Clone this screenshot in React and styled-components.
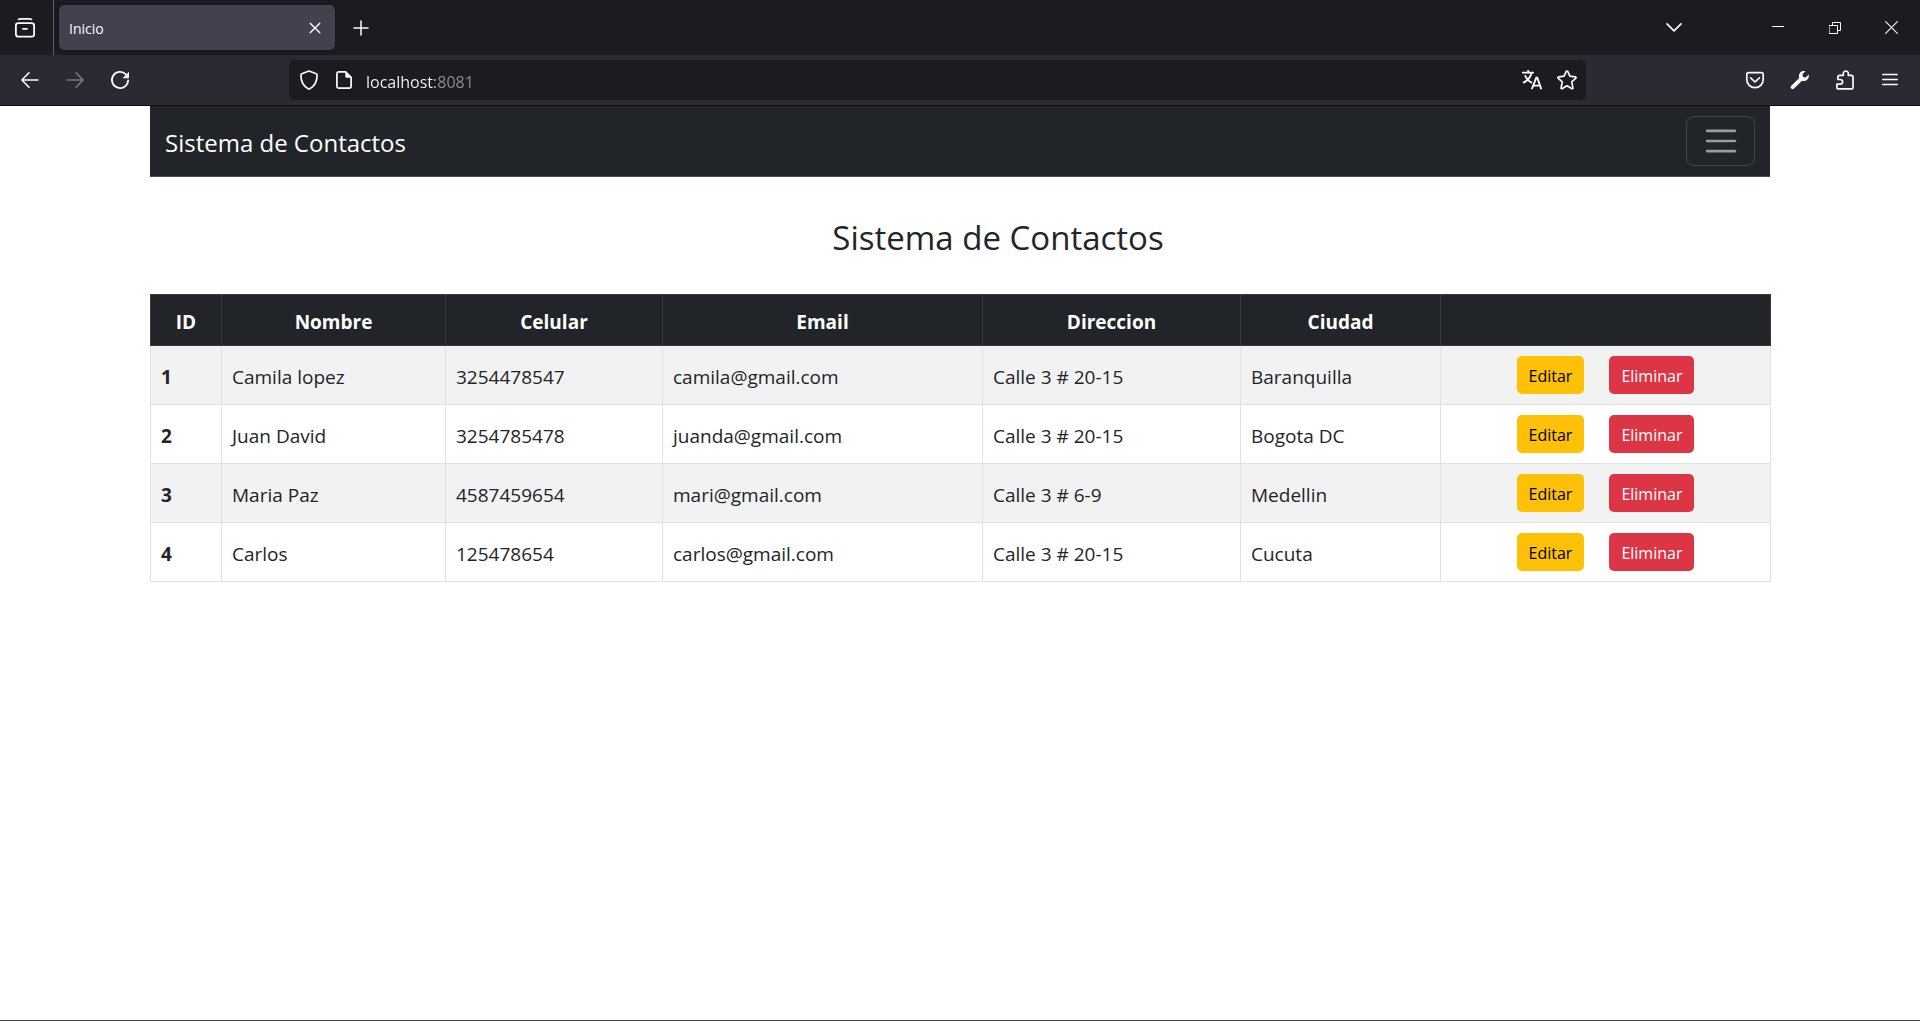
import React from "react";
import styled, { createGlobalStyle, css } from "styled-components";

const GlobalStyle = createGlobalStyle`
  *, *::before, *::after { box-sizing: border-box; }
  body {
    margin: 0;
    background: #fff;
    color: #212529;
    font-family: "Segoe UI", "Open Sans", "Noto Sans", sans-serif;
    font-size: 19px;
    line-height: 30px;
  }
  button, input { font-family: inherit; }
`;

const Window = styled.div`
  min-height: 100vh;
  display: flex;
  flex-direction: column;
  border-bottom: 1px solid #444;
`;

/* Browser chrome */

const TabStrip = styled.div`
  display: flex;
  align-items: center;
  height: 55px;
  background: #1c1b22;
  color: #fbfbfe;
`;

const IconButton = styled.button`
  display: flex;
  align-items: center;
  justify-content: center;
  flex: none;
  width: ${({ $width = 44 }) => $width}px;
  height: 40px;
  padding: 0;
  border: 0;
  border-radius: 5px;
  background: transparent;
  color: #fbfbfe;

  &:disabled { color: #7c7b82; }
`;

const ViewArea = styled.div`
  display: flex;
  align-items: center;
  align-self: stretch;
  width: 54px;
  padding-left: 3px;
  margin-right: 5px;
  border-right: 1px solid #5c5b62;
`;

const Tab = styled.div`
  display: flex;
  align-items: center;
  justify-content: space-between;
  width: 276px;
  height: 45px;
  margin-right: 4px;
  padding: 0 5px 0 10px;
  border-radius: 5px;
  background: #42414d;
  box-shadow: 0 0 4px rgba(0, 0, 0, 0.4);
  font-size: 14px;
  line-height: 20px;
`;

const TabTitle = styled.span`
  padding-top: 2px;
`;

const WindowControls = styled.div`
  display: flex;
  margin-left: auto;
`;

const ListTabs = styled.div`
  margin-right: 53px;
`;

const Toolbar = styled.div`
  display: flex;
  align-items: center;
  height: 51px;
  padding: 0 8px;
  border-bottom: 1px solid #0c0c0d;
  background: #2b2a33;
`;

const ButtonGroup = styled.div`
  display: flex;
  gap: 1px;
`;

const UrlBar = styled.form`
  display: flex;
  align-items: center;
  flex: 1;
  min-width: 0;
  height: 40px;
  margin: 0 147px;
  padding: 0 2px;
  border-radius: 5px;
  background: #1c1b22;
`;

const UrlInput = styled.input`
  flex: 1;
  min-width: 0;
  height: 32px;
  margin-left: 5px;
  padding: 4px 0 0;
  border: 0;
  outline: 0;
  color: #fbfbfe;
  font-size: 16px;
  line-height: 28px;
  background: linear-gradient(90deg, #fbfbfe 69px, #8f8e96 69px);
  background-clip: text;
  -webkit-background-clip: text;
  -webkit-text-fill-color: transparent;
`;

/* Page */

const Container = styled.div`
  width: 100%;
  max-width: 1620px;
  margin: 0 auto;
`;

const Navbar = styled.nav`
  display: flex;
  align-items: center;
  justify-content: space-between;
  padding: 10px 15px;
  border-bottom: 1px solid #495057;
  background: #212529;
`;

const Brand = styled.a`
  padding-top: 4px;
  color: #fff;
  font-size: 24px;
  line-height: 38px;
  text-decoration: none;
`;

const Toggler = styled.button`
  display: flex;
  align-items: center;
  justify-content: center;
  width: 69px;
  height: 50px;
  padding: 0;
  border: 1px solid rgba(255, 255, 255, 0.15);
  border-radius: 8px;
  background: transparent;
  color: rgba(255, 255, 255, 0.55);
`;

const Title = styled.h3`
  margin: 0;
  padding: 40px 0 35px 76px;
  font-size: 33px;
  font-weight: 400;
  line-height: 42px;
  text-align: center;
`;

const Table = styled.table`
  width: 100%;
  table-layout: fixed;
  border-collapse: collapse;
`;

const cell = css`
  padding: 12px 10px 8px;
  border: 1px solid #dee2e6;
  vertical-align: middle;
`;

const HeadCell = styled.th`
  ${cell}
  border-color: #373b3e;
  background: #212529;
  color: #fff;
  font-weight: 700;
  text-align: center;
`;

const Row = styled.tr`
  background: #fff;
  &:nth-child(odd) { background: #f2f2f2; }
`;

const IdCell = styled.th`
  ${cell}
  font-weight: 700;
  text-align: left;
`;

const Cell = styled.td`
  ${cell}
`;

const ActionCell = styled(Cell)`
  padding: 10px;
`;

const Actions = styled.div`
  display: flex;
  justify-content: center;
  gap: 25px;
`;

const tones = {
  warning: { background: "#ffc107", color: "#000" },
  danger: { background: "#dc3545", color: "#fff" },
};

const ActionLink = styled.a`
  padding: 7px 12px 5px;
  border-radius: 5px;
  background: ${({ $tone }) => tones[$tone].background};
  color: ${({ $tone }) => tones[$tone].color};
  font-size: 16px;
  line-height: 26px;
  text-decoration: none;
`;

/* Icons */

const Icon = ({ size = 20, box = 20, stroke = 1.6, children }) => (
  <svg
    width={size}
    height={size}
    viewBox={`0 0 ${box} ${box}`}
    fill="none"
    stroke="currentColor"
    strokeWidth={stroke}
    strokeLinecap="round"
    strokeLinejoin="round"
    aria-hidden="true"
  >
    {children}
  </svg>
);

const ViewIcon = () => (
  <Icon stroke={1.8}>
    <path d="M3.6 1.4C4.2.9 5 .9 5.6.9h8.8c.6 0 1.400 0 2 .5" />
    <rect x="0.9" y="5.2" width="18.200" height="13.500" rx="2.400" />
    <path d="M8 10.800h4" />
  </Icon>
);
const CloseTabIcon = () => (
  <Icon stroke={1.4}><path d="M5.200 5.200l9.600 9.600M14.800 5.200l-9.600 9.600" /></Icon>
);
const PlusIcon = () => (
  <Icon stroke={1.5}><path d="M10 3v14M3 10h14" /></Icon>
);
const ChevronIcon = () => (
  <Icon stroke={1.700}><path d="M3 5.800l7 7 7-7" /></Icon>
);
const MinimizeIcon = () => (
  <Icon size={12} box={12} stroke={1}><path strokeLinecap="butt" d="M0 4.500h12" /></Icon>
);
const RestoreIcon = () => (
  <Icon size={12} box={12} stroke={1}>
    <path strokeLinejoin="miter" d="M.5 3.500h8v8h-8zM3.500 3.500v-3h8v8h-3" />
  </Icon>
);
const CloseIcon = () => (
  <Icon size={13} box={13} stroke={1.100}><path strokeLinecap="butt" d="M.3.3l12.400 12.400M12.700.3L.3 12.700" /></Icon>
);
const BackIcon = () => (
  <Icon><path d="M18 10H2M9 2.800L1.900 10 9 17.200" /></Icon>
);
const ForwardIcon = () => (
  <Icon><path d="M2 10h16M11 2.800l7.100 7.200-7.100 7.200" /></Icon>
);
const ReloadIcon = () => (
  <Icon stroke={1.800}>
    <path d="M15.800 4.300A8.100 8.100 0 1 0 18.100 10.500" />
    <path d="M19 1.700v6.500h-6.500z" fill="currentColor" stroke="none" />
  </Icon>
);
const ShieldIcon = () => (
  <Icon stroke={1.700}>
    <path d="M10 1l7.200 2.800c.6.200.9.700.9 1.300 0 6.400-2.200 11-7.300 13.700-.5.300-1.100.300-1.600 0C4.100 16.100 1.900 11.500 1.900 5.100c0-.6.300-1.100.9-1.300z" />
  </Icon>
);
const PageIcon = () => (
  <Icon stroke={1.700}>
    <path d="M4.400 1.900h7.200l5.500 5.500v8.900a1.900 1.900 0 0 1-1.900 1.900H4.800a1.900 1.900 0 0 1-1.900-1.900V3.800a1.900 1.900 0 0 1 1.900-1.900z" />
    <path d="M11.300 1.900v4.600c0 .8.400 1.200 1.200 1.200h4.600z" fill="currentColor" stroke="none" />
  </Icon>
);
const TranslateIcon = () => (
  <Icon stroke={1.900}>
    <path strokeLinecap="butt" d="M0 2.600h12M6.200 0v2.600M3 5.200c1.200 3.300 4 6 7 7.600M9.400 3c-.8 4.300-3.600 7.600-8.400 9.800" />
    <path strokeLinecap="butt" strokeLinejoin="miter" d="M9.800 19.200l4.500-11.500h1l4 11.500M11.400 15.600h6.800" />
  </Icon>
);
const StarIcon = () => (
  <Icon stroke={1.700}>
    <path d="M9.200 1.500c.3-.7 1.300-.7 1.600 0l2.100 4.700 5.300.6c.8.100 1.100 1 .5 1.500l-4 3.500 1.200 5.900c.2.800-.7 1.300-1.300.9L10 15.800l-4.600 2.800c-.6.400-1.500-.1-1.300-.9l1.200-5.900-4-3.500c-.6-.5-.3-1.400.5-1.500l5.300-.6z" />
  </Icon>
);
const PocketIcon = () => (
  <Icon stroke={1.700}>
    <path d="M3.600 2.700h12.800c1 0 1.800.8 1.800 1.800v5a8.200 8.200 0 0 1-16.400 0v-5c0-1 .8-1.800 1.800-1.800z" />
    <path d="M5.600 7.800L10 12l4.400-4.200" />
  </Icon>
);
const WrenchIcon = () => (
  <Icon stroke={1}>
    <path
      fill="currentColor"
      stroke="none"
      d="M18.700 4.600l-3 3-2.600-.7-.7-2.600 3-3c-2-.6-4.200 0-5.500 1.700-1.100 1.500-1.300 3.300-.7 4.900L1.300 15.800a1.900 1.900 0 0 0 2.700 2.800l8.100-7.800c1.700.6 3.600.3 5-1 1.600-1.400 2.100-3.400 1.600-5.200z"
    />
  </Icon>
);
const PuzzleIcon = () => (
  <Icon stroke={1.700}>
    <path d="M3.500 18.900h12.800c1 0 1.700-.7 1.700-1.700V7c0-1-.7-1.700-1.700-1.700h-3V3.500a2.500 2.500 0 0 0-5 0v1.800H4.500c-1 0-1.600.7-1.600 1.700v2.500h2.300a2.300 2.300 0 0 1 0 4.700H1.900v3c0 1 .6 1.700 1.600 1.700z" />
  </Icon>
);
const MenuIcon = () => (
  <Icon stroke={1.500}><path d="M2.800 4.500h14.400M2.800 9.500h14.400M2.800 14.500h14.400" /></Icon>
);
const TogglerIcon = () => (
  <Icon size={38} box={30} stroke={2}><path d="M4 7h22M4 15h22M4 23h22" /></Icon>
);

/* Data */

const columns = [
  { label: "ID", width: 71 },
  { label: "Nombre", width: 224 },
  { label: "Celular", width: 217 },
  { label: "Email", width: 320 },
  { label: "Direccion", width: 258 },
  { label: "Ciudad", width: 200 },
  { label: "", width: 330 },
];

const Col = styled.col`
  width: ${({ $width }) => $width}px;
`;

const contacts = [
  { id: 1, nombre: "Camila lopez", celular: "3254478547", email: "camila@gmail.com", direccion: "Calle 3 # 20-15", ciudad: "Baranquilla" },
  { id: 2, nombre: "Juan David", celular: "3254785478", email: "juanda@gmail.com", direccion: "Calle 3 # 20-15", ciudad: "Bogota DC" },
  { id: 3, nombre: "Maria Paz", celular: "4587459654", email: "mari@gmail.com", direccion: "Calle 3 # 6-9", ciudad: "Medellin" },
  { id: 4, nombre: "Carlos", celular: "125478654", email: "carlos@gmail.com", direccion: "Calle 3 # 20-15", ciudad: "Cucuta" },
];

const BrowserChrome = () => (
  <header>
    <TabStrip>
      <ViewArea>
        <IconButton aria-label="Firefox View"><ViewIcon /></IconButton>
      </ViewArea>
      <Tab>
        <TabTitle>Inicio</TabTitle>
        <IconButton $width={30} aria-label="Cerrar pestaña"><CloseTabIcon /></IconButton>
      </Tab>
      <IconButton aria-label="Nueva pestaña"><PlusIcon /></IconButton>
      <WindowControls>
        <ListTabs>
          <IconButton aria-label="Listar pestañas"><ChevronIcon /></IconButton>
        </ListTabs>
        <IconButton $width={57} aria-label="Minimizar"><MinimizeIcon /></IconButton>
        <IconButton $width={57} aria-label="Restaurar"><RestoreIcon /></IconButton>
        <IconButton $width={57} aria-label="Cerrar"><CloseIcon /></IconButton>
      </WindowControls>
    </TabStrip>
    <Toolbar>
      <ButtonGroup>
        <IconButton aria-label="Atrás"><BackIcon /></IconButton>
        <IconButton aria-label="Adelante" disabled><ForwardIcon /></IconButton>
        <IconButton aria-label="Recargar"><ReloadIcon /></IconButton>
      </ButtonGroup>
      <UrlBar onSubmit={(e) => e.preventDefault()}>
        <IconButton type="button" $width={35} aria-label="Protección"><ShieldIcon /></IconButton>
        <IconButton type="button" $width={35} aria-label="Información del sitio"><PageIcon /></IconButton>
        <UrlInput aria-label="Dirección" defaultValue="localhost:8081" spellCheck={false} />
        <IconButton type="button" $width={35} aria-label="Traducir"><TranslateIcon /></IconButton>
        <IconButton type="button" $width={35} aria-label="Marcador"><StarIcon /></IconButton>
      </UrlBar>
      <ButtonGroup>
        <IconButton aria-label="Pocket"><PocketIcon /></IconButton>
        <IconButton aria-label="Herramientas"><WrenchIcon /></IconButton>
        <IconButton aria-label="Extensiones"><PuzzleIcon /></IconButton>
        <IconButton aria-label="Menú"><MenuIcon /></IconButton>
      </ButtonGroup>
    </Toolbar>
  </header>
);

const ContactTable = () => (
  <Table>
    <colgroup>
      {columns.map((c) => <Col key={c.label} $width={c.width} />)}
    </colgroup>
    <thead>
      <tr>
        {columns.map((c) => <HeadCell key={c.label} scope="col">{c.label}</HeadCell>)}
      </tr>
    </thead>
    <tbody>
      {contacts.map((c) => (
        <Row key={c.id}>
          <IdCell scope="row">{c.id}</IdCell>
          <Cell>{c.nombre}</Cell>
          <Cell>{c.celular}</Cell>
          <Cell>{c.email}</Cell>
          <Cell>{c.direccion}</Cell>
          <Cell>{c.ciudad}</Cell>
          <ActionCell>
            <Actions>
              <ActionLink $tone="warning" href={`#editar-${c.id}`}>Editar</ActionLink>
              <ActionLink $tone="danger" href={`#eliminar-${c.id}`}>Eliminar</ActionLink>
            </Actions>
          </ActionCell>
        </Row>
      ))}
    </tbody>
  </Table>
);

export default function App() {
  return (
    <>
      <GlobalStyle />
      <Window>
        <BrowserChrome />
        <Container>
          <Navbar>
            <Brand href="#inicio">Sistema de Contactos</Brand>
            <Toggler aria-label="Abrir menú"><TogglerIcon /></Toggler>
          </Navbar>
          <main>
            <Title>Sistema de Contactos</Title>
            <ContactTable />
          </main>
        </Container>
      </Window>
    </>
  );
}
